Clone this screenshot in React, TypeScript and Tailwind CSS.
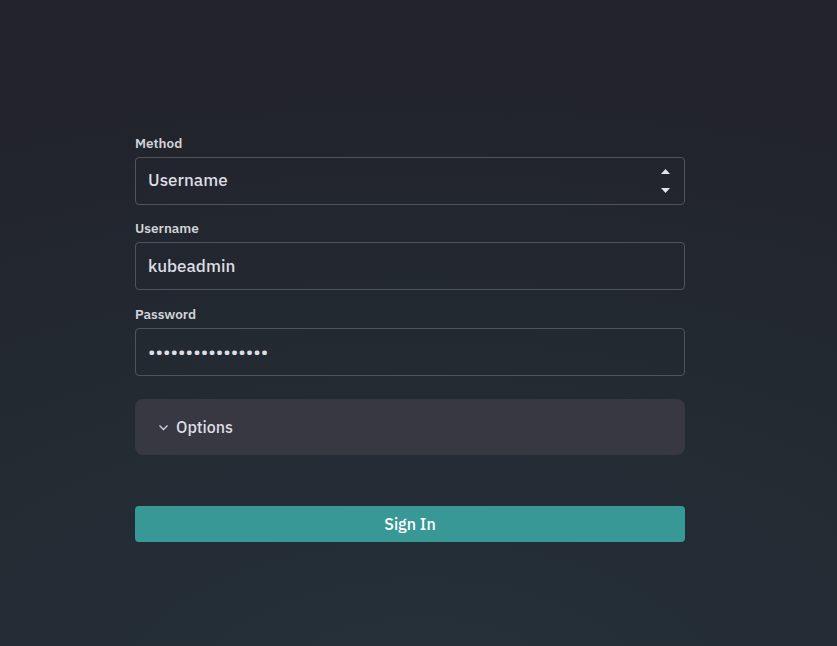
import React, { useState } from 'react';

const font = { fontFamily: '"IBM Plex Sans", "Noto Sans", "Liberation Sans", sans-serif' };

function Field({ label, children }: { label: string; children: React.ReactNode }) {
  return (
    <div className="flex flex-col">
      <label className="text-[13.5px] font-semibold text-[#d2d4da] leading-[16px] mb-[6px]">{label}</label>
      {children}
    </div>
  );
}

export default function App() {
  const [method, setMethod] = useState('Username');
  const [username, setUsername] = useState('kubeadmin');
  const [password, setPassword] = useState('supersecretpass1');
  const [open, setOpen] = useState(false);

  return (
    <div
      style={font}
      className="min-h-screen w-full bg-[radial-gradient(ellipse_140%_100%_at_50%_110%,#25313a_0%,#232a32_55%,#22232b_100%)] flex justify-center pr-[17px]"
    >
      <form className="w-[550px] pt-[135px] flex flex-col" onSubmit={(e) => e.preventDefault()}>
        <Field label="Method">
          <div className="relative">
            <select
              value={method}
              onChange={(e) => setMethod(e.target.value)}
              className="appearance-none w-full h-[48px] rounded-[4px] border border-[#50535c] bg-transparent px-3 text-[17px] font-medium text-[#dcdee3] outline-none"
            >
              <option>Username</option>
              <option>Token</option>
            </select>
            <div className="pointer-events-none absolute right-[15px] top-0 h-full flex flex-col justify-center gap-[14px]">
              <svg width="9" height="5" viewBox="0 0 9 5"><path d="M4.5 0L9 5H0z" fill="#e2e4e8" /></svg>
              <svg width="9" height="5" viewBox="0 0 9 5"><path d="M0 0h9L4.5 5z" fill="#e2e4e8" /></svg>
            </div>
          </div>
        </Field>

        <div className="mt-[15px]">
          <Field label="Username">
            <input
              value={username}
              onChange={(e) => setUsername(e.target.value)}
              className="w-full h-[48px] rounded-[4px] border border-[#50535c] bg-transparent px-3 text-[17px] font-medium text-[#dcdee3] outline-none"
            />
          </Field>
        </div>

        <div className="mt-[16px]">
          <Field label="Password">
            <input
              type="password"
              value={password}
              onChange={(e) => setPassword(e.target.value)}
              className="w-full h-[48px] rounded-[4px] border border-[#50535c] bg-transparent px-3 text-[19px] text-[#dcdee3] outline-none"
            />
          </Field>
        </div>

        <div className="mt-[23px] rounded-[8px] bg-[#383842] h-[56px] flex items-center px-[23px]">
          <button
            type="button"
            onClick={() => setOpen(!open)}
            className="flex items-center gap-[7px] text-[16px] text-[#dcdee3] font-medium"
          >
            <svg width="11" height="10" viewBox="0 0 11 10" className={open ? 'rotate-180' : ''}>
              <path d="M1.5 3.5L5.5 7.5l4-4" fill="none" stroke="#d2d4da" strokeWidth="1.3" />
            </svg>
            Options
          </button>
        </div>

        <button
          type="submit"
          className="mt-[51px] h-[36px] w-full rounded-[4px] bg-[#389896] text-[16px] font-medium text-white"
        >
          Sign In
        </button>
      </form>
    </div>
  );
}
